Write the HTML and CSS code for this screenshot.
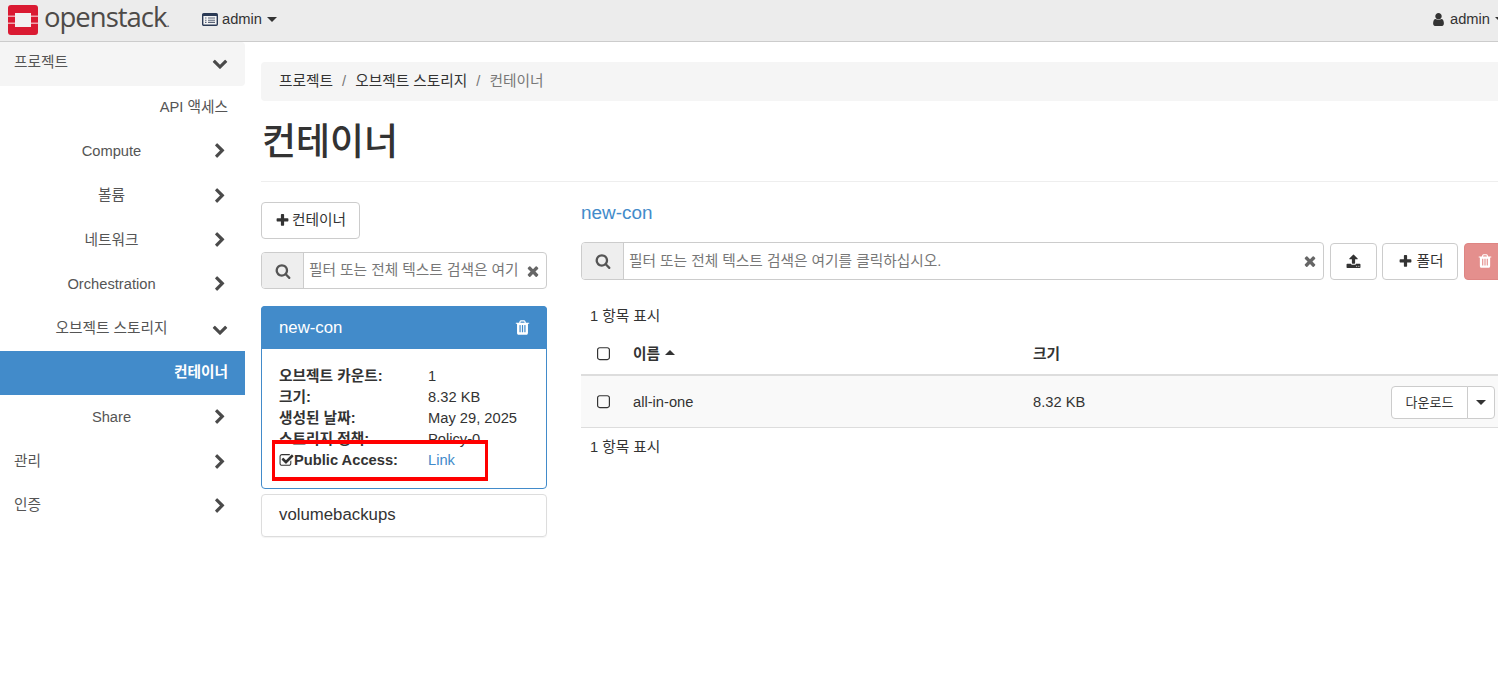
FILE: index.html
```html
<!DOCTYPE html>
<html lang="ko">
<head>
<meta charset="utf-8">
<title>컨테이너 - OpenStack</title>
<link rel="stylesheet" href="styles.css">
</head>
<body>
<svg class="sprite" aria-hidden="true">
  <symbol id="i-search" viewBox="0 0 1792 1792"><path d="M1216 832q0-185-131.500-316.500t-316.500-131.500-316.500 131.500-131.500 316.500 131.500 316.500 316.500 131.500 316.500-131.500 131.500-316.500zm512 832q0 52-38 90t-90 38q-54 0-90-38l-343-342q-179 124-399 124-143 0-273.500-55.500t-225-150-150-225-55.500-273.500 55.500-273.500 150-225 225-150 273.500-55.500 273.500 55.500 225 150 150 225 55.500 273.500q0 220-124 399l343 343q37 37 37 90z"/></symbol>
  <symbol id="i-plus" viewBox="0 0 1792 1792"><path d="M1600 736v192q0 40-28 68t-68 28h-416v416q0 40-28 68t-68 28h-192q-40 0-68-28t-28-68v-416h-416q-40 0-68-28t-28-68v-192q0-40 28-68t68-28h416v-416q0-40 28-68t68-28h192q40 0 68 28t28 68v416h416q40 0 68 28t28 68z"/></symbol>
  <symbol id="i-times" viewBox="0 0 1792 1792"><path d="M1490 1322q0 40-28 68l-136 136q-28 28-68 28t-68-28l-294-294-294 294q-28 28-68 28t-68-28l-136-136q-28-28-28-68t28-68l294-294-294-294q-28-28-28-68t28-68l136-136q28-28 68-28t68 28l294 294 294-294q28-28 68-28t68 28l136 136q28 28 28 68t-28 68l-294 294 294 294q28 28 28 68z"/></symbol>
  <symbol id="i-down" viewBox="0 0 1792 1792"><path d="M1683 808l-742 741q-19 19-45 19t-45-19l-742-741q-19-19-19-45.500t19-45.500l166-165q19-19 45-19t45 19l531 531 531-531q19-19 45-19t45 19l166 165q19 19 19 45.500t-19 45.500z"/></symbol>
  <symbol id="i-right" viewBox="0 0 1792 1792"><path d="M1363 877l-742 742q-19 19-45 19t-45-19l-166-166q-19-19-19-45t19-45l531-531-531-531q-19-19-19-45t19-45l166-166q19-19 45-19t45 19l742 742q19 19 19 45t-19 45z"/></symbol>
  <symbol id="i-trash" viewBox="0 0 1792 1792"><path d="M704 1376v-704q0-14-9-23t-23-9h-64q-14 0-23 9t-9 23v704q0 14 9 23t23 9h64q14 0 23-9t9-23zm256 0v-704q0-14-9-23t-23-9h-64q-14 0-23 9t-9 23v704q0 14 9 23t23 9h64q14 0 23-9t9-23zm256 0v-704q0-14-9-23t-23-9h-64q-14 0-23 9t-9 23v704q0 14 9 23t23 9h64q14 0 23-9t9-23zm-544-992h448l-48-117q-7-9-17-11h-317q-10 2-17 11zm928 32v64q0 14-9 23t-23 9h-96v948q0 83-47 143.500t-113 60.500h-832q-66 0-113-58.500t-47-141.500v-952h-96q-14 0-23-9t-9-23v-64q0-14 9-23t23-9h309l70-167q15-37 54-63t79-26h320q40 0 79 26t54 63l70 167h309q14 0 23 9t9 23z"/></symbol>
  <symbol id="i-upload" viewBox="0 0 1792 1792"><path d="M1344 1472q0-26-19-45t-45-19-45 19-19 45 19 45 45 19 45-19 19-45zm256 0q0-26-19-45t-45-19-45 19-19 45 19 45 45 19 45-19 19-45zm128-224v320q0 40-28 68t-68 28h-1472q-40 0-68-28t-28-68v-320q0-40 28-68t68-28h427q21 56 70.500 92t110.500 36h256q61 0 110.500-36t70.500-92h427q40 0 68 28t28 68zm-325-648q-17 40-59 40h-256v448q0 26-19 45t-45 19h-256q-26 0-45-19t-19-45v-448h-256q-42 0-59-40-17-39 14-69l448-448q18-19 45-19t45 19l448 448q31 30 14 69z"/></symbol>
  <symbol id="i-user" viewBox="0 0 1792 1792"><path d="M1536 1399q0 109-62.500 187t-150.500 78h-854q-88 0-150.500-78t-62.500-187q0-85 8.500-160.500t31.500-152 58.500-131 94-89 134.500-34.500q131 128 313 128t313-128q76 0 134.500 34.500t94 89 58.500 131 31.500 152 8.500 160.500zm-256-887q0 159-112.500 271.500t-271.500 112.500-271.500-112.500-112.500-271.500 112.500-271.500 271.500-112.500 271.500 112.500 112.500 271.500z"/></symbol>
  <symbol id="i-check" viewBox="0 0 1792 1792"><path d="M1472 930v318q0 119-84.500 203.500t-203.500 84.500h-832q-119 0-203.500-84.500t-84.500-203.500v-832q0-119 84.500-203.500t203.500-84.500h832q63 0 117 25 15 7 18 23 3 17-9 29l-49 49q-10 10-23 10-3 0-9-2-23-6-45-6h-832q-66 0-113 47t-47 113v832q0 66 47 113t113 47h832q66 0 113-47t47-113v-254q0-13 9-22l64-64q10-10 23-10 6 0 12 3 20 8 20 29zm231-489l-814 814q-24 24-57 24t-57-24l-430-430q-24-24-24-57t24-57l110-110q24-24 57-24t57 24l263 263 647-647q24-24 57-24t57 24l110 110q24 24 24 57t-24 57z"/></symbol>
  <symbol id="i-square" viewBox="0 0 1408 1792"><path d="M1120 256h-832q-66 0-113 47t-47 113v832q0 66 47 113t113 47h832q66 0 113-47t47-113v-832q0-66-47-113t-113-47zm288 160v832q0 119-84.500 203.500t-203.500 84.500h-832q-119 0-203.500-84.500t-84.500-203.500v-832q0-119 84.500-203.500t203.500-84.500h832q119 0 203.500 84.500t84.500 203.500z"/></symbol>
</svg>

<header class="navbar">
  <div class="brand">
    <svg class="logo-mark" viewBox="0 0 30 30" aria-hidden="true">
      <rect width="30" height="30" rx="3" fill="#da1a32"/>
      <rect x="7" y="8" width="16" height="14" fill="#f2f2f2"/>
      <rect y="10.500" width="7" height="1.500" fill="#f0a3ad"/>
      <rect y="17.500" width="7" height="1.500" fill="#f0a3ad"/>
      <rect x="23" y="10.500" width="7" height="1.500" fill="#f0a3ad"/>
      <rect x="23" y="17.500" width="7" height="1.500" fill="#f0a3ad"/>
    </svg>
    <span class="logo-text">openstack<span class="logo-dot">.</span></span>
  </div>
  <div class="project-menu">
    <svg class="list-icon" viewBox="0 0 16 13" aria-hidden="true">
      <rect x="0.700" y="0.700" width="14.600" height="11.600" rx="1" fill="#f4f4f4" stroke="#2b3a55" stroke-width="1.400"/>
      <rect x="1" y="1" width="14" height="2" fill="#2b3a55"/>
      <path d="M3 5h1.500M3 7.200h1.500M3 9.400h1.500M6 5h7M6 7.200h7M6 9.400h7" stroke="#5a6478" stroke-width="1.100"/>
    </svg>
    <span>admin</span><span class="caret"></span>
  </div>
  <div class="user-menu">
    <svg class="ic ic-user"><use href="#i-user"/></svg>
    <span>admin</span><span class="caret"></span>
  </div>
</header>

<div class="page">
  <nav class="sidebar">
    <a class="nav-top open">프로젝트<svg class="ic nav-chev"><use href="#i-down"/></svg></a>
    <a class="nav-sub leaf first">API 액세스</a>
    <a class="nav-sub"><span class="nav-label">Compute</span><svg class="ic nav-chev"><use href="#i-right"/></svg></a>
    <a class="nav-sub"><span class="nav-label">볼륨</span><svg class="ic nav-chev"><use href="#i-right"/></svg></a>
    <a class="nav-sub"><span class="nav-label">네트워크</span><svg class="ic nav-chev"><use href="#i-right"/></svg></a>
    <a class="nav-sub"><span class="nav-label">Orchestration</span><svg class="ic nav-chev"><use href="#i-right"/></svg></a>
    <a class="nav-sub"><span class="nav-label">오브젝트 스토리지</span><svg class="ic nav-chev"><use href="#i-down"/></svg></a>
    <a class="nav-sub leaf active">컨테이너</a>
    <a class="nav-sub"><span class="nav-label">Share</span><svg class="ic nav-chev"><use href="#i-right"/></svg></a>
    <a class="nav-top">관리<svg class="ic nav-chev"><use href="#i-right"/></svg></a>
    <a class="nav-top">인증<svg class="ic nav-chev"><use href="#i-right"/></svg></a>
  </nav>

  <main class="content">
    <ol class="breadcrumb">
      <li>프로젝트</li><li class="sep">/</li><li>오브젝트 스토리지</li><li class="sep">/</li><li class="current">컨테이너</li>
    </ol>
    <h1 class="page-title">컨테이너</h1>

    <div class="columns">
      <section class="col-left">
        <button class="btn btn-new"><svg class="ic ic-plus"><use href="#i-plus"/></svg>컨테이너</button>
        <div class="search search-left">
          <span class="search-addon"><svg class="ic ic-search"><use href="#i-search"/></svg></span>
          <span class="search-text">필터 또는 전체 텍스트 검색은 여기</span>
          <svg class="ic search-clear"><use href="#i-times"/></svg>
        </div>
        <article class="panel panel-active">
          <div class="panel-head"><span>new-con</span><svg class="ic ic-trash"><use href="#i-trash"/></svg></div>
          <dl class="panel-body">
            <dt>오브젝트 카운트:</dt><dd>1</dd>
            <dt>크기:</dt><dd>8.32 KB</dd>
            <dt>생성된 날짜:</dt><dd>May 29, 2025</dd>
            <dt>스토리지 정책:</dt><dd>Policy-0</dd>
            <dt class="dt-check"><svg class="ic ic-check"><use href="#i-check"/></svg>Public Access:</dt><dd><a class="link">Link</a></dd>
          </dl>
          <div class="highlight"></div>
        </article>
        <article class="panel panel-plain">volumebackups</article>
      </section>

      <section class="col-right">
        <h2 class="container-name">new-con</h2>
        <div class="toolbar">
          <div class="search search-right">
            <span class="search-addon"><svg class="ic ic-search"><use href="#i-search"/></svg></span>
            <span class="search-text">필터 또는 전체 텍스트 검색은 여기를 클릭하십시오.</span>
            <svg class="ic search-clear"><use href="#i-times"/></svg>
          </div>
          <button class="btn btn-upload"><svg class="ic ic-upload"><use href="#i-upload"/></svg></button>
          <button class="btn btn-folder"><svg class="ic ic-plus"><use href="#i-plus"/></svg>폴더</button>
          <button class="btn btn-delete"><svg class="ic ic-del"><use href="#i-trash"/></svg></button>
        </div>
        <p class="count count-top">1 항목 표시</p>
        <table class="objects">
          <thead>
            <tr>
              <th class="cell-check"><svg class="ic ic-square"><use href="#i-square"/></svg></th>
              <th class="cell-name">이름<span class="caret-up"></span></th>
              <th class="cell-size">크기</th>
              <th class="cell-actions"></th>
            </tr>
          </thead>
          <tbody>
            <tr>
              <td class="cell-check"><svg class="ic ic-square"><use href="#i-square"/></svg></td>
              <td class="cell-name">all-in-one</td>
              <td class="cell-size">8.32 KB</td>
              <td class="cell-actions">
                <div class="split">
                  <button class="btn btn-download">다운로드</button>
                  <button class="btn btn-toggle"><span class="caret"></span></button>
                </div>
              </td>
            </tr>
          </tbody>
        </table>
        <p class="count count-bottom">1 항목 표시</p>
      </section>
    </div>
  </main>
</div>
</body>
</html>
```

FILE: styles.css
```css
* { box-sizing: border-box; }

html, body {
  margin: 0;
  height: 100%;
  overflow: hidden;
}

body {
  width: 1498px;
  height: 681px;
  font-family: "Liberation Sans", "Noto Sans CJK KR", sans-serif;
  font-size: 14.700px;
  line-height: 21px;
  color: #333;
  background: #fff;
}

.sprite { display: none; }

.ic {
  width: 15px;
  height: 15px;
  fill: currentColor;
  flex: none;
}

/* Top bar */
.navbar {
  display: flex;
  align-items: center;
  height: 42px;
  background: #ececec;
  border-bottom: 1px solid #cccccc;
  padding: 0 0 2px 8px;
}

.brand {
  display: flex;
  align-items: center;
  width: 194px;
}

.logo-mark {
  width: 30px;
  height: 30px;
  flex: none;
}

.logo-text {
  margin-left: 6px;
  font-family: "Open Sans", sans-serif;
  font-size: 27.500px;
  font-weight: 500;
  line-height: 36px;
  letter-spacing: -1px;
  color: #4d4a48;
}

.logo-dot {
  font-size: 12px;
  letter-spacing: 0;
}

.project-menu,
.user-menu {
  display: flex;
  align-items: center;
}

.list-icon {
  width: 16px;
  height: 13px;
  margin-right: 4px;
}

.caret {
  display: inline-block;
  width: 0;
  height: 0;
  margin-left: 5px;
  border-top: 5px solid #333;
  border-left: 5px solid transparent;
  border-right: 5px solid transparent;
}

.user-menu {
  margin-left: auto;
  margin-right: -7px;
}

.ic-user {
  width: 15px;
  height: 15px;
  margin-right: 4px;
}

/* Page */
.page {
  display: flex;
  height: 639px;
}

.sidebar {
  width: 245px;
  flex: none;
  display: flex;
  flex-direction: column;
}

.sidebar a {
  display: flex;
  align-items: center;
  height: 44.300px;
  color: #555;
  padding-right: 17px;
}

.nav-top {
  padding-left: 14px;
  justify-content: space-between;
}

.nav-top.open {
  height: 44px;
  padding-bottom: 3px;
  background: #f5f5f5;
  border-bottom-right-radius: 4px;
  border-top-right-radius: 4px;
}

.nav-sub.first {
  margin-top: -1px;
}

.nav-sub.leaf {
  justify-content: flex-end;
}

.nav-label {
  flex: 1;
  text-align: center;
  margin-right: -11px;
}

.nav-chev {
  width: 16px;
  height: 16px;
  color: #4a4a4a;
}

.sidebar .active {
  background: #428bca;
  color: #fff;
  font-weight: 700;
}

/* Main */
.content {
  flex: none;
  width: 1300px;
  padding: 20px 16px 0;
}

.breadcrumb {
  display: flex;
  align-items: center;
  list-style: none;
  margin: 0;
  height: 39px;
  padding: 0 18px;
  background: #f5f5f5;
  border-radius: 4px;
}

.sep {
  margin: 0 9px;
  color: #777;
}

.current { color: #777; }

.page-title {
  margin: 0;
  padding: 20px 0 0 1px;
  height: 81px;
  font-size: 37px;
  line-height: 44px;
  font-weight: 500;
  border-bottom: 1px solid #eeeeee;
}

.columns {
  display: flex;
  gap: 34px;
  padding-top: 20px;
}

.col-left {
  width: 286px;
  flex: none;
}

.col-right {
  flex: 1;
  min-width: 0;
}

/* Buttons */
.btn {
  display: inline-flex;
  align-items: center;
  justify-content: center;
  height: 37px;
  padding: 0;
  font: inherit;
  color: #333;
  background: #fff;
  border: 1px solid #ccc;
  border-radius: 4px;
}

.btn-new {
  width: 99px;
  gap: 2px;
}

.ic-plus {
  width: 15px;
  height: 15px;
}

.ic-search {
  width: 16px;
  height: 16px;
}

.ic-upload {
  width: 15px;
  height: 15px;
}

.ic-del {
  width: 16px;
  height: 16px;
}

/* Search */
.search {
  display: flex;
  align-items: center;
  height: 37px;
  border: 1px solid #ccc;
  border-radius: 4px;
  background: #fff;
  overflow: hidden;
}

.search-left {
  margin-top: 13px;
}

.search-right {
  width: 743px;
  height: 38px;
  flex: none;
}

.search-addon {
  display: flex;
  align-items: center;
  justify-content: center;
  width: 42px;
  height: 100%;
  flex: none;
  background: #eeeeee;
  border-right: 1px solid #ccc;
  color: #555;
}

.search-text {
  flex: 1;
  min-width: 0;
  padding-left: 5px;
  color: #777;
  white-space: nowrap;
  overflow: hidden;
}

.search-clear {
  width: 16px;
  height: 16px;
  margin: 0 5px 0 4px;
  color: #666;
}

/* Panels */
.panel {
  position: relative;
  border-radius: 4px;
}

.panel-active {
  height: 183px;
  margin-top: 17px;
  border: 1px solid #428bca;
}

.panel-head {
  display: flex;
  align-items: center;
  justify-content: space-between;
  height: 43px;
  margin: -1px -1px 0;
  padding: 0 16px 0 18px;
  font-size: 16.800px;
  color: #fff;
  background: #428bca;
  border-radius: 4px 4px 0 0;
}

.ic-trash {
  width: 17px;
  height: 17px;
}

.panel-body {
  display: grid;
  grid-template-columns: 149px 1fr;
  grid-auto-rows: 21px;
  margin: 0;
  padding: 17px 17px 0;
}

.panel-body dt { font-weight: 700; }
.panel-body dd { margin: 0; }

.dt-check {
  display: flex;
  align-items: center;
}

.ic-check {
  width: 15px;
  height: 15px;
  margin-right: 0;
}

.link { color: #428bca; }

.highlight {
  position: absolute;
  left: 10px;
  top: 133px;
  width: 216px;
  height: 41px;
  border: solid #ff0000;
  border-width: 4px 3px;
}

.panel-plain {
  display: flex;
  align-items: center;
  height: 43px;
  margin-top: 5px;
  padding: 0 0 2px 17px;
  font-size: 16.800px;
  border: 1px solid #ddd;
  box-shadow: 0 1px 1px rgba(0, 0, 0, 0.05);
}

/* Right column */
.container-name {
  margin: 0;
  height: 40px;
  font-size: 18.900px;
  line-height: 21px;
  font-weight: 400;
  color: #428bca;
}

.toolbar {
  display: flex;
  gap: 6px;
  align-items: center;
}

.btn-upload { width: 47px; flex: none; }

.btn-folder {
  width: 76px;
  flex: none;
  gap: 3px;
  padding-left: 2px;
  margin-left: -1px;
}

.btn-delete {
  width: 41px;
  flex: none;
  color: #fff;
  background: #e48f8d;
  border-color: #de8583;
}

.count {
  margin: 0;
  padding-left: 9px;
}

.count-top { padding-top: 26px; }
.count-bottom { padding-top: 9px; }

/* Table */
.objects {
  width: 920px;
  margin-top: 7px;
  border-collapse: collapse;
  table-layout: fixed;
}

.objects th {
  height: 41px;
  text-align: left;
  font-weight: 700;
  border-bottom: 2px solid #dddddd;
}

.objects td {
  height: 52px;
  padding-top: 3px;
  background: #f9f9f9;
  border-bottom: 1px solid #dddddd;
}

.objects .cell-check {
  width: 51px;
  padding-left: 16px;
}

.objects .cell-name { width: 400px; }
.objects .cell-size { width: 358px; }
.objects .cell-actions { width: 111px; }

.ic-square {
  display: block;
  width: 13px;
  height: 16.500px;
}

.caret-up {
  display: inline-block;
  width: 0;
  height: 0;
  margin-left: 5px;
  margin-bottom: 4px;
  vertical-align: middle;
  border-bottom: 5px solid #333;
  border-left: 5px solid transparent;
  border-right: 5px solid transparent;
}

.split {
  display: flex;
  width: 104px;
}

.btn-download {
  width: 77px;
  height: 33px;
  font-size: 13px;
  border-radius: 4px 0 0 4px;
}

.btn-toggle {
  width: 28px;
  height: 33px;
  margin-left: -1px;
  border-radius: 0 4px 4px 0;
}

.btn-toggle .caret { margin-left: 0; }
```
